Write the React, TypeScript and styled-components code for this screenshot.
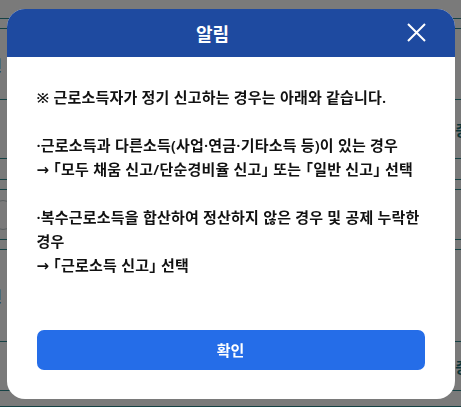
import React from 'react';
import styled, { createGlobalStyle } from 'styled-components';

const GlobalStyle = createGlobalStyle`
  html, body {
    margin: 0;
    padding: 0;
    width: 100%;
    height: 100%;
    overflow: hidden;
  }
  body {
    font-family: "Noto Sans CJK KR", "Noto Sans", sans-serif;
    background: #ffffff;
  }
  * { box-sizing: border-box; }
`;

// page behind the dialog
const Page = styled.div`
  width: 461px;
  height: 407px;
  display: flex;
  flex-direction: column;
  background: #ffffff;
`;

const Row = styled.div<{ $h: number }>`
  height: ${({ $h }) => $h}px;
  flex-shrink: 0;
  border-bottom: 1px solid #2e8a90;
  display: flex;
  align-items: center;
  color: #1b6f75;
  font-size: 15px;
  font-weight: 700;
`;

const EdgeText = styled.span<{ $side: 'left' | 'right' }>`
  ${({ $side }) => ($side === 'left' ? 'margin-left: -12px;' : 'margin-right: -8px; margin-left: auto;')}
`;

const ArrowCircle = styled.span`
  width: 30px;
  height: 30px;
  margin-left: -12px;
  border-radius: 50%;
  border: 1px solid #b9c4c6;
  display: flex;
  align-items: center;
  justify-content: flex-end;
  padding-right: 3px;
  color: #2e8a90;
  font-size: 10px;
`;

const Overlay = styled.div`
  position: fixed;
  inset: 0;
  background: rgba(0, 0, 0, 0.52);
  display: flex;
  align-items: center;
  justify-content: center;
`;

const Dialog = styled.div`
  width: 448px;
  background: #ffffff;
  border-radius: 18px;
  overflow: hidden;
  display: flex;
  flex-direction: column;
`;

const Header = styled.div`
  height: 48px;
  background: #1e4aa0;
  display: flex;
  align-items: center;
  padding: 0 20px;
`;

const Title = styled.h2`
  flex: 1;
  margin: 0;
  text-align: center;
  color: #ffffff;
  font-size: 18px;
  font-weight: 700;
`;

const CloseButton = styled.button`
  width: 36px;
  height: 36px;
  padding: 0;
  border: 0;
  background: transparent;
  display: flex;
  align-items: center;
  justify-content: center;
  cursor: pointer;
`;

const Body = styled.div`
  padding: 28px 30px 29px;
  display: flex;
  flex-direction: column;
`;

const Message = styled.p`
  margin: 0 0 53px;
  color: #111111;
  font-family: "Noto Sans", "DejaVu Sans", "Noto Sans CJK KR", sans-serif;
  font-feature-settings: "halt";
  font-size: 15px;
  font-weight: 600;
  line-height: 24px;
  letter-spacing: 0.2px;
  white-space: pre-line;
  word-break: keep-all;
`;

const ConfirmButton = styled.button`
  height: 40px;
  border: 0;
  border-radius: 7px;
  background: #256de8;
  color: #ffffff;
  font-family: inherit;
  font-size: 15px;
  font-weight: 700;
  cursor: pointer;
`;

const message = `※ 근로소득자가 정기 신고하는 경우는 아래와 같습니다.

·근로소득과 다른소득(사업·연금·기타소득 등)이 있는 경우
→ 「모두 채움 신고/단순경비율 신고」 또는 「일반 신고」 선택

·복수근로소득을 합산하여 정산하지 않은 경우 및 공제 누락한 경우
→ 「근로소득 신고」 선택`;

export default function App() {
  return (
    <>
      <GlobalStyle />
      <Page>
        <Row $h={19} />
        <Row $h={10} />
        <Row $h={71}>
          <EdgeText $side="left">신</EdgeText>
        </Row>
        <Row $h={59}>
          <EdgeText $side="right">증</EdgeText>
        </Row>
        <Row $h={21} />
        <Row $h={10} />
        <Row $h={50}>
          <ArrowCircle>‹</ArrowCircle>
        </Row>
        <Row $h={10} />
        <Row $h={92}>
          <EdgeText $side="left">신</EdgeText>
        </Row>
        <Row $h={49}>
          <EdgeText $side="right">증</EdgeText>
        </Row>
        <Row $h={16} />
      </Page>
      <Overlay>
        <Dialog role="dialog" aria-label="알림">
          <Header>
            <Title>알림</Title>
            <CloseButton aria-label="닫기">
              <svg width="19" height="19" viewBox="0 0 19 19" fill="none">
                <path d="M1 1L18 18M18 1L1 18" stroke="#ffffff" strokeWidth="2" />
              </svg>
            </CloseButton>
          </Header>
          <Body>
            <Message>{message}</Message>
            <ConfirmButton>확인</ConfirmButton>
          </Body>
        </Dialog>
      </Overlay>
    </>
  );
}
